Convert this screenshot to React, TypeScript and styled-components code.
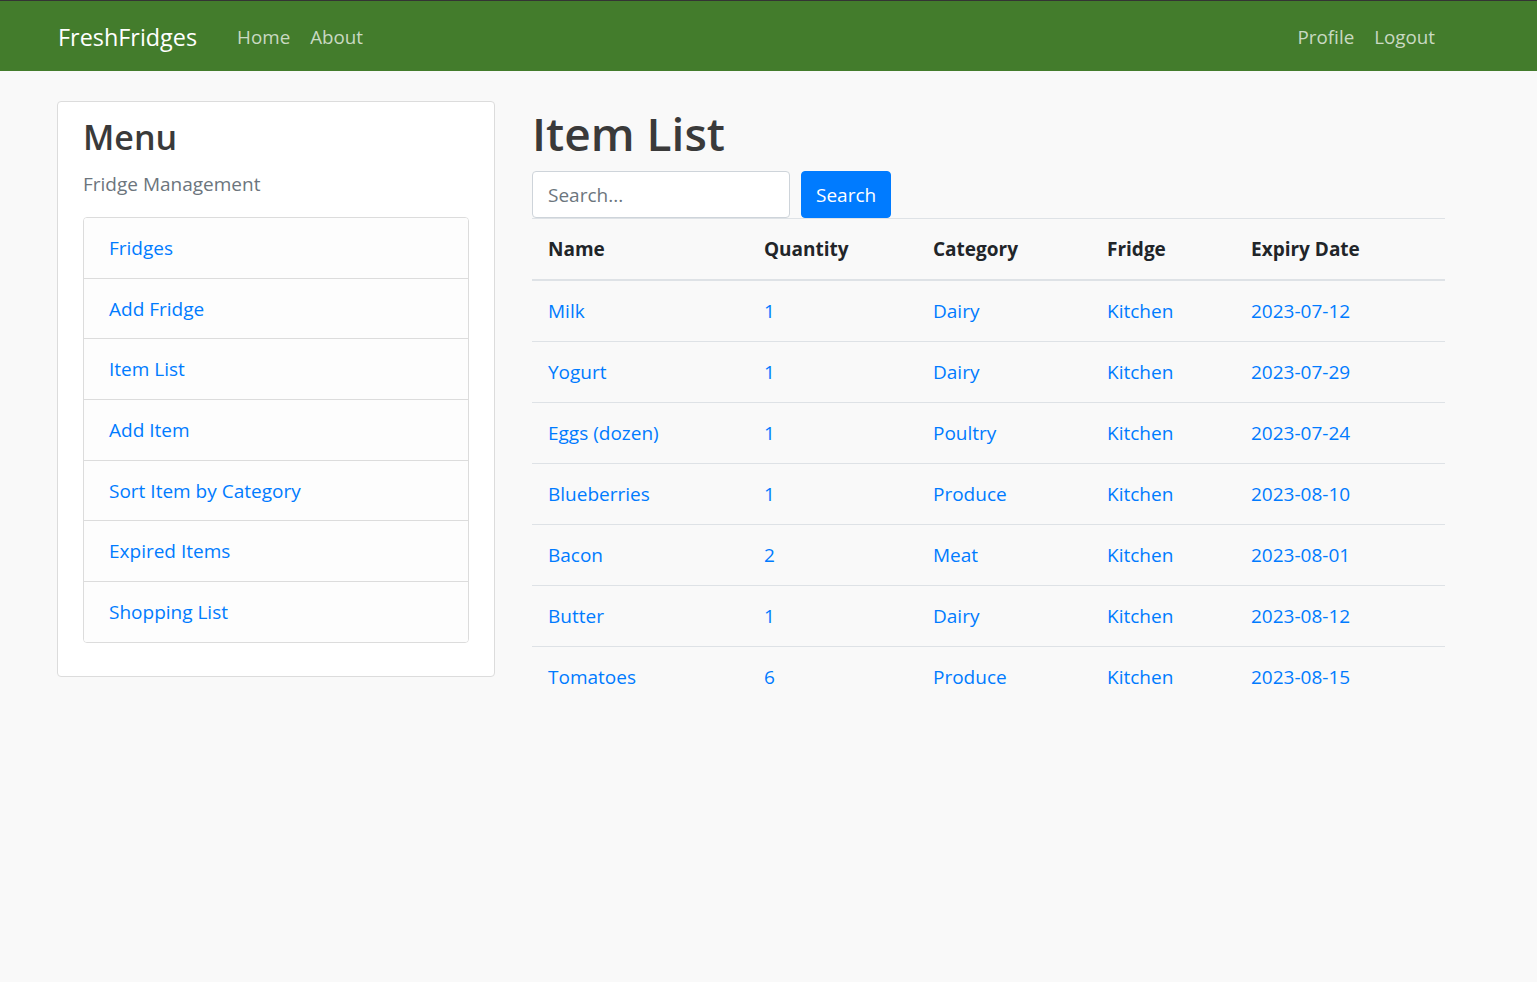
import styled, { createGlobalStyle } from "styled-components";

const FONT = `"Open Sans", "Noto Sans", "Liberation Sans", sans-serif`;

const GlobalStyle = createGlobalStyle`
  body {
    margin: 0;
    background: #f9f9f9;
    font-family: ${FONT};
    font-size: 20px;
    color: #212529;
  }
  * {
    box-sizing: border-box;
  }
`;

interface IItem {
  name: string;
  quantity: number;
  category: string;
  fridge: string;
  expiry: string;
}

const items: IItem[] = [
  { name: "Milk", quantity: 1, category: "Dairy", fridge: "Kitchen", expiry: "2023-07-12" },
  { name: "Yogurt", quantity: 1, category: "Dairy", fridge: "Kitchen", expiry: "2023-07-29" },
  { name: "Eggs (dozen)", quantity: 1, category: "Poultry", fridge: "Kitchen", expiry: "2023-07-24" },
  { name: "Blueberries", quantity: 1, category: "Produce", fridge: "Kitchen", expiry: "2023-08-10" },
  { name: "Bacon", quantity: 2, category: "Meat", fridge: "Kitchen", expiry: "2023-08-01" },
  { name: "Butter", quantity: 1, category: "Dairy", fridge: "Kitchen", expiry: "2023-08-12" },
  { name: "Tomatoes", quantity: 6, category: "Produce", fridge: "Kitchen", expiry: "2023-08-15" },
];

const menuLinks = [
  "Fridges",
  "Add Fridge",
  "Item List",
  "Add Item",
  "Sort Item by Category",
  "Expired Items",
  "Shopping List",
];

const columns = [
  { label: "Name", width: 216 },
  { label: "Quantity", width: 169 },
  { label: "Category", width: 174 },
  { label: "Fridge", width: 144 },
  { label: "Expiry Date", width: 210 },
];

const NavBar = styled.nav`
  display: flex;
  align-items: center;
  height: 71px;
  padding: 1px 92px 0 48px;
  background: #437c2c;
  border-top: 1px solid #343434;
`;
const Brand = styled.a`
  padding: 0 10px;
  margin-right: 20px;
  font-size: 23.4px;
  color: #ffffff;
  text-decoration: none;
`;
const NavGroup = styled.div<{ $right?: boolean }>`
  display: flex;
  margin-left: ${(p) => (p.$right ? "auto" : "0")};
`;
const NavLink = styled.a`
  padding: 0 10px;
  font-size: 18.8px;
  line-height: 30px;
  color: rgba(255, 255, 255, 0.72);
  text-decoration: none;
`;

const Page = styled.div`
  display: flex;
  align-items: flex-start;
  gap: 37px;
  padding: 30px 92px 0 57px;
`;

const Card = styled.aside`
  width: 438px;
  flex-shrink: 0;
  background: #ffffff;
  border: 1px solid #dcdcdc;
  border-radius: 4px;
  padding: 11px 25px 33px;
`;
const CardTitle = styled.h2`
  margin: 0;
  font-size: 34px;
  line-height: 48px;
  font-weight: 600;
  color: #3a3a3a;
`;
const CardSubtitle = styled.h6`
  margin: 8px 0 0;
  font-size: 19px;
  line-height: 30px;
  font-weight: 400;
  color: #6c757d;
`;
const ListGroup = styled.ul`
  list-style: none;
  margin: 18px 0 0;
  padding: 0;
  border: 1px solid #dcdcdc;
  border-radius: 4px;
  overflow: hidden;
`;
const ListItem = styled.li`
  padding: 15px 25px 14.7px;
  line-height: 30px;
  background: #fdfdfd;
  border-top: 1px solid #dcdcdc;
  &:first-child {
    border-top: 0;
  }
  a {
    color: #007bff;
    text-decoration: none;
    font-size: 19px;
  }
`;

const Main = styled.main`
  flex: 1;
`;
const Heading = styled.h1`
  margin: 2px 0 8px;
  font-size: 46px;
  line-height: 60px;
  font-weight: 600;
  color: #3a3a3a;
`;
const SearchForm = styled.form`
  display: flex;
  gap: 11px;
`;
const SearchInput = styled.input`
  width: 258px;
  height: 47px;
  padding: 0 15px;
  font-family: ${FONT};
  font-size: 19px;
  color: #495057;
  background: #ffffff;
  border: 1px solid #ced4da;
  border-radius: 4px;
  outline: none;
  &::placeholder {
    color: #6c757d;
  }
`;
const SearchButton = styled.button`
  height: 47px;
  padding: 0 14px;
  font-family: ${FONT};
  font-size: 19px;
  color: #ffffff;
  background: #007bff;
  border: 1px solid #007bff;
  border-radius: 4px;
  cursor: pointer;
`;

const Table = styled.table`
  width: 100%;
  border-collapse: collapse;
  th,
  td {
    padding: 15px 16px;
    line-height: 30px;
    text-align: left;
    vertical-align: top;
    border-top: 1px solid #dee2e6;
  }
  th {
    font-size: 19px;
    font-weight: 700;
    color: #212529;
    border-bottom: 2px solid #dee2e6;
  }
  td {
    font-size: 19px;
  }
  a {
    color: #007bff;
    text-decoration: none;
  }
`;

function App() {
  return (
    <>
      <GlobalStyle />
      <NavBar>
        <Brand href="#">FreshFridges</Brand>
        <NavGroup>
          <NavLink href="#">Home</NavLink>
          <NavLink href="#">About</NavLink>
        </NavGroup>
        <NavGroup $right>
          <NavLink href="#">Profile</NavLink>
          <NavLink href="#">Logout</NavLink>
        </NavGroup>
      </NavBar>
      <Page>
        <Card>
          <CardTitle>Menu</CardTitle>
          <CardSubtitle>Fridge Management</CardSubtitle>
          <ListGroup>
            {menuLinks.map((link) => (
              <ListItem key={link}>
                <a href="#">{link}</a>
              </ListItem>
            ))}
          </ListGroup>
        </Card>
        <Main>
          <Heading>Item List</Heading>
          <SearchForm onSubmit={(e) => e.preventDefault()}>
            <SearchInput placeholder="Search..." />
            <SearchButton type="submit">Search</SearchButton>
          </SearchForm>
          <Table>
            <thead>
              <tr>
                {columns.map((c) => (
                  <th key={c.label} style={{ width: c.width }}>
                    {c.label}
                  </th>
                ))}
              </tr>
            </thead>
            <tbody>
              {items.map((item) => (
                <tr key={item.name}>
                  <td><a href="#">{item.name}</a></td>
                  <td><a href="#">{item.quantity}</a></td>
                  <td><a href="#">{item.category}</a></td>
                  <td><a href="#">{item.fridge}</a></td>
                  <td><a href="#">{item.expiry}</a></td>
                </tr>
              ))}
            </tbody>
          </Table>
        </Main>
      </Page>
    </>
  );
}

export default App;
